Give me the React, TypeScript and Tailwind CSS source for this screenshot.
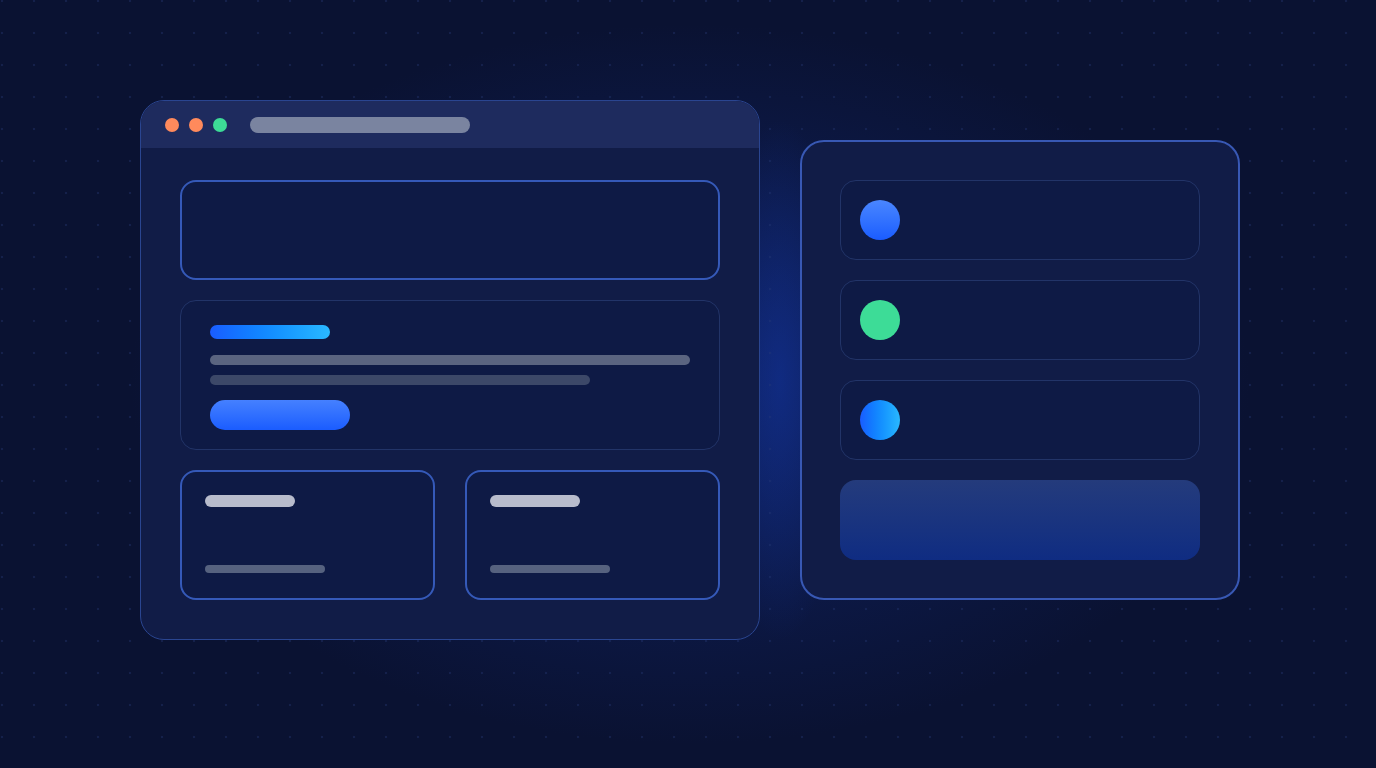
import React from "react";

function WindowDots() {
  return (
    <div className="flex items-center gap-[10px]">
      <span className="h-[14px] w-[14px] rounded-full bg-[#ff8a5c]" />
      <span className="h-[14px] w-[14px] rounded-full bg-[#ff8a5c]" />
      <span className="h-[14px] w-[14px] rounded-full bg-[#3ddc97]" />
    </div>
  );
}

function StatCard() {
  return (
    <div className="flex h-[130px] flex-col justify-between rounded-[16px] border-2 border-[#3559b8] bg-[#0e1a45] px-[23px] pt-[23px] pb-[25px]">
      <div className="h-[12px] w-[90px] rounded-full bg-[#b8bccc]" />
      <div className="h-[8px] w-[120px] rounded-full bg-[#56627f]" />
    </div>
  );
}

function ListRow({ dot }: { dot: string }) {
  return (
    <div className="flex h-[80px] items-center rounded-[16px] border border-[#223468] bg-[#0e1a45] px-[19px]">
      <span className={`h-[40px] w-[40px] rounded-full ${dot}`} />
    </div>
  );
}

export default function App() {
  return (
    <div className="h-screen w-full overflow-hidden bg-[#0a1232] bg-[radial-gradient(ellipse_70px_260px_at_780px_380px,rgba(18,52,160,0.55),transparent),radial-gradient(ellipse_560px_360px_at_690px_384px,#0f2262,transparent)]">
      <div className="flex h-full w-full justify-center bg-[radial-gradient(circle,rgba(40,58,120,0.35)_1px,transparent_1.6px)] bg-[length:32px_32px] bg-[position:-14px_-15px] pt-[100px]">
        <div className="ml-[4px] flex h-[540px] items-center gap-[40px]">
          {/* browser window */}
          <div className="flex h-[540px] w-[620px] flex-col overflow-hidden rounded-[24px] border border-[#2a4590] bg-[#111c47]">
            <div className="flex h-[47px] shrink-0 items-center bg-[#1e2b5e] pl-[24px]">
              <WindowDots />
              <div className="ml-[23px] h-[16px] w-[220px] rounded-full bg-[#7a84a0]" />
            </div>
            <div className="flex flex-1 flex-col gap-[20px] px-[39px] pt-[32px]">
              <div className="h-[100px] rounded-[16px] border-2 border-[#3559b8] bg-[#0e1a45]" />
              <div className="flex h-[150px] flex-col rounded-[16px] border border-[#223468] bg-[#0e1a45] px-[29px] pt-[24px]">
                <div className="h-[14px] w-[120px] rounded-full bg-gradient-to-r from-[#1a5cff] to-[#2ab8ff]" />
                <div className="mt-[16px] h-[10px] w-[480px] rounded-full bg-[#5a6480]" />
                <div className="mt-[10px] h-[10px] w-[380px] rounded-full bg-[#3c4868]" />
                <div className="mt-[15px] h-[30px] w-[140px] rounded-full bg-gradient-to-b from-[#4580ff] to-[#1a5cff]" />
              </div>
              <div className="grid grid-cols-2 gap-[30px]">
                <StatCard />
                <StatCard />
              </div>
            </div>
          </div>

          {/* side panel */}
          <div className="flex h-[460px] w-[440px] flex-col gap-[20px] rounded-[24px] border-2 border-[#3858b4] bg-[#111c47] p-[38px]">
            <ListRow dot="bg-gradient-to-b from-[#4a86ff] to-[#1a5cff]" />
            <ListRow dot="bg-[#3ddc97]" />
            <ListRow dot="bg-gradient-to-r from-[#1a5cff] to-[#2ab8ff]" />
            <div className="h-[80px] rounded-[16px] bg-gradient-to-b from-[#243b7c] to-[#0f2c82]" />
          </div>
        </div>
      </div>
    </div>
  );
}
